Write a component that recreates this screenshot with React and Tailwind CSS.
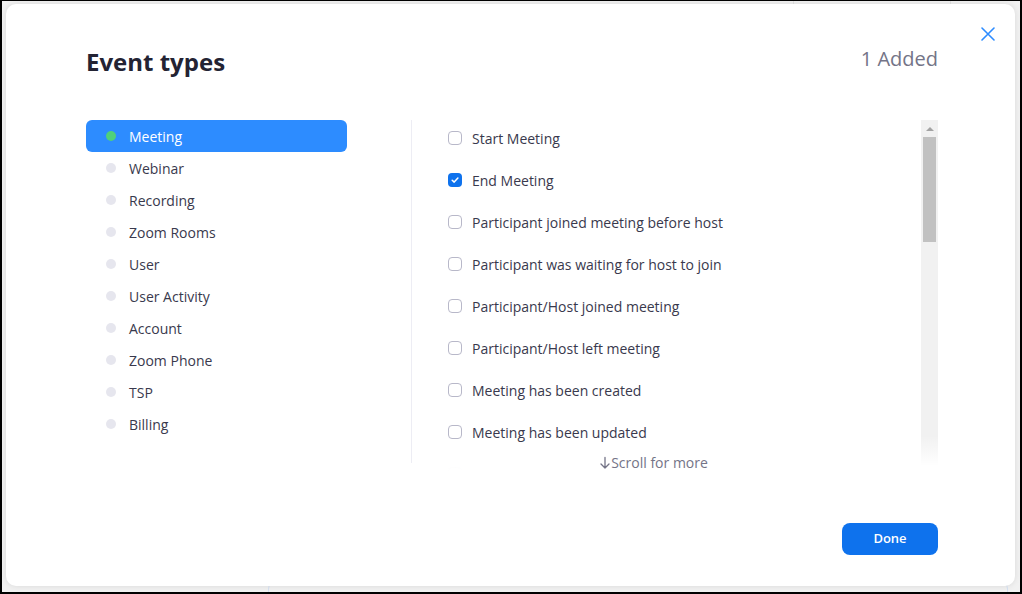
import React from "react";

const categories = ["Meeting","Webinar","Recording","Zoom Rooms","User","User Activity","Account","Zoom Phone","TSP","Billing"];
const events = [
  ["Start Meeting", false],
  ["End Meeting", true],
  ["Participant joined meeting before host", false],
  ["Participant was waiting for host to join", false],
  ["Participant/Host joined meeting", false],
  ["Participant/Host left meeting", false],
  ["Meeting has been created", false],
  ["Meeting has been updated", false],
  ["", false],
];

function Checkbox({ checked }) {
  if (checked) {
    return (
      <span className="flex h-[14px] w-[14px] items-center justify-center rounded-[4px] bg-[#0e72ed]">
        <svg width="10" height="10" viewBox="0 0 10 10" fill="none">
          <path d="M2.2 5.2 L4.2 7.1 L7.9 3.1" stroke="white" strokeWidth="1.5" strokeLinecap="round" strokeLinejoin="round" />
        </svg>
      </span>
    );
  }
  return <span className="block h-[14px] w-[14px] rounded-[4px] border border-[#b8b8c9] bg-white" />;
}

export default function App() {
  return (
    <div
      className="relative h-[594px] w-[1022px] overflow-hidden border-t border-r-2 border-b-2 border-l-2 border-black bg-[#f1f1f1]"
      style={{ fontFamily: '"Open Sans", "Liberation Sans", sans-serif' }}
    >
      {/* faint background page bits */}
      <div className="absolute left-[266px] top-[578px] h-[40px] w-[740px] rounded-[10px] border border-[#d6e2f3]" />
      <div className="absolute left-[791px] top-[-4px] h-[10px] w-px bg-[#e2e2e2]" />
      <div className="absolute left-[948px] top-[-4px] h-[10px] w-px bg-[#e2e2e2]" />

      <div className="relative ml-[4px] mt-[3px] flex h-[582px] w-[1009px] flex-col rounded-[10px] bg-white pl-[80px] pr-[77px] pt-[42px] shadow-[0_0_6px_rgba(0,0,0,0.10)]">
        {/* close */}
        <button className="absolute right-[19px] top-[22px] flex h-[16px] w-[16px] items-center justify-center">
          <svg width="14" height="14" viewBox="0 0 14 14" fill="none">
            <path d="M1 1 L13 13 M13 1 L1 13" stroke="#2d8cff" strokeWidth="1.6" strokeLinecap="round" />
          </svg>
        </button>

        {/* header */}
        <div className="flex h-[32px] items-center justify-between">
          <h1 className="text-[24px] font-bold leading-[32px] text-[#232333]">Event types</h1>
          <span className="-mt-[7px] text-[20px] leading-[28px] text-[#747487]">1 Added</span>
        </div>

        {/* body */}
        <div className="mt-[40px] flex h-[356px]">
          {/* categories */}
          <ul className="mt-[2px] w-[261px] shrink-0">
            {categories.map((c, i) => {
              const active = i === 0;
              return (
                <li
                  key={c}
                  className={
                    "flex h-[32px] items-center rounded-[6px] pl-[20px] text-[14px] " +
                    (active ? "bg-[#2d8cff] text-white" : "text-[#39394d]")
                  }
                >
                  <span
                    className={
                      "mr-[13px] block h-[10px] w-[10px] rounded-full " +
                      (active ? "bg-[#4fd07a]" : "bg-[#e6e6ee]")
                    }
                  />
                  {c}
                </li>
              );
            })}
          </ul>

          {/* divider */}
          <div className="ml-[64px] mt-[2px] h-[343px] w-px bg-[#ededf4]" />

          {/* events */}
          <div className="relative flex flex-1">
            <div className="relative h-[354px] flex-1 overflow-hidden pl-[36px]">
              <div className="-mt-[1px]">
                {events.map(([t, c], i) => (
                  <div key={i} className="flex h-[42px] items-center gap-[10px] text-[14px] text-[#39394d]">
                    <Checkbox checked={c} />
                    {t && <span>{t}</span>}
                  </div>
                ))}
              </div>
              <div className="pointer-events-none absolute bottom-0 left-0 right-0 h-[22px] bg-gradient-to-b from-white/70 via-white/95 to-white" />
              <div className="absolute bottom-0 left-0 right-0 flex h-[20px] items-center justify-center pr-[26px] text-[14px] text-[#747487]">
                <span className="flex items-center">
                  <svg width="12" height="14" viewBox="0 0 12 14" fill="none" className="mt-[2px]">
                    <path d="M6 1.5 V12 M2 8 L6 12 L10 8" stroke="#747487" strokeWidth="1.3" strokeLinecap="round" strokeLinejoin="round" />
                  </svg>
                  Scroll for more
                </span>
              </div>
            </div>
            {/* scrollbar */}
            <div className="relative mt-[2px] flex h-[346px] w-[17px] flex-col items-center bg-[#f1f1f1]">
              <div className="mt-[7px] h-0 w-0 border-x-[4px] border-b-[4px] border-x-transparent border-b-[#a3a3a3]" />
              <div className="mt-[6px] h-[105px] w-[13px] bg-[#c1c1c1]" />
              <div className="absolute bottom-0 left-0 right-0 h-[30px] bg-gradient-to-b from-white/0 to-white" />
            </div>
          </div>
        </div>

        {/* footer */}
        <div className="mt-[49px] flex justify-end">
          <button className="h-[32px] w-[96px] rounded-[8px] bg-[#0e72ed] text-[13px] font-semibold text-white">
            Done
          </button>
        </div>
      </div>
    </div>
  );
}
